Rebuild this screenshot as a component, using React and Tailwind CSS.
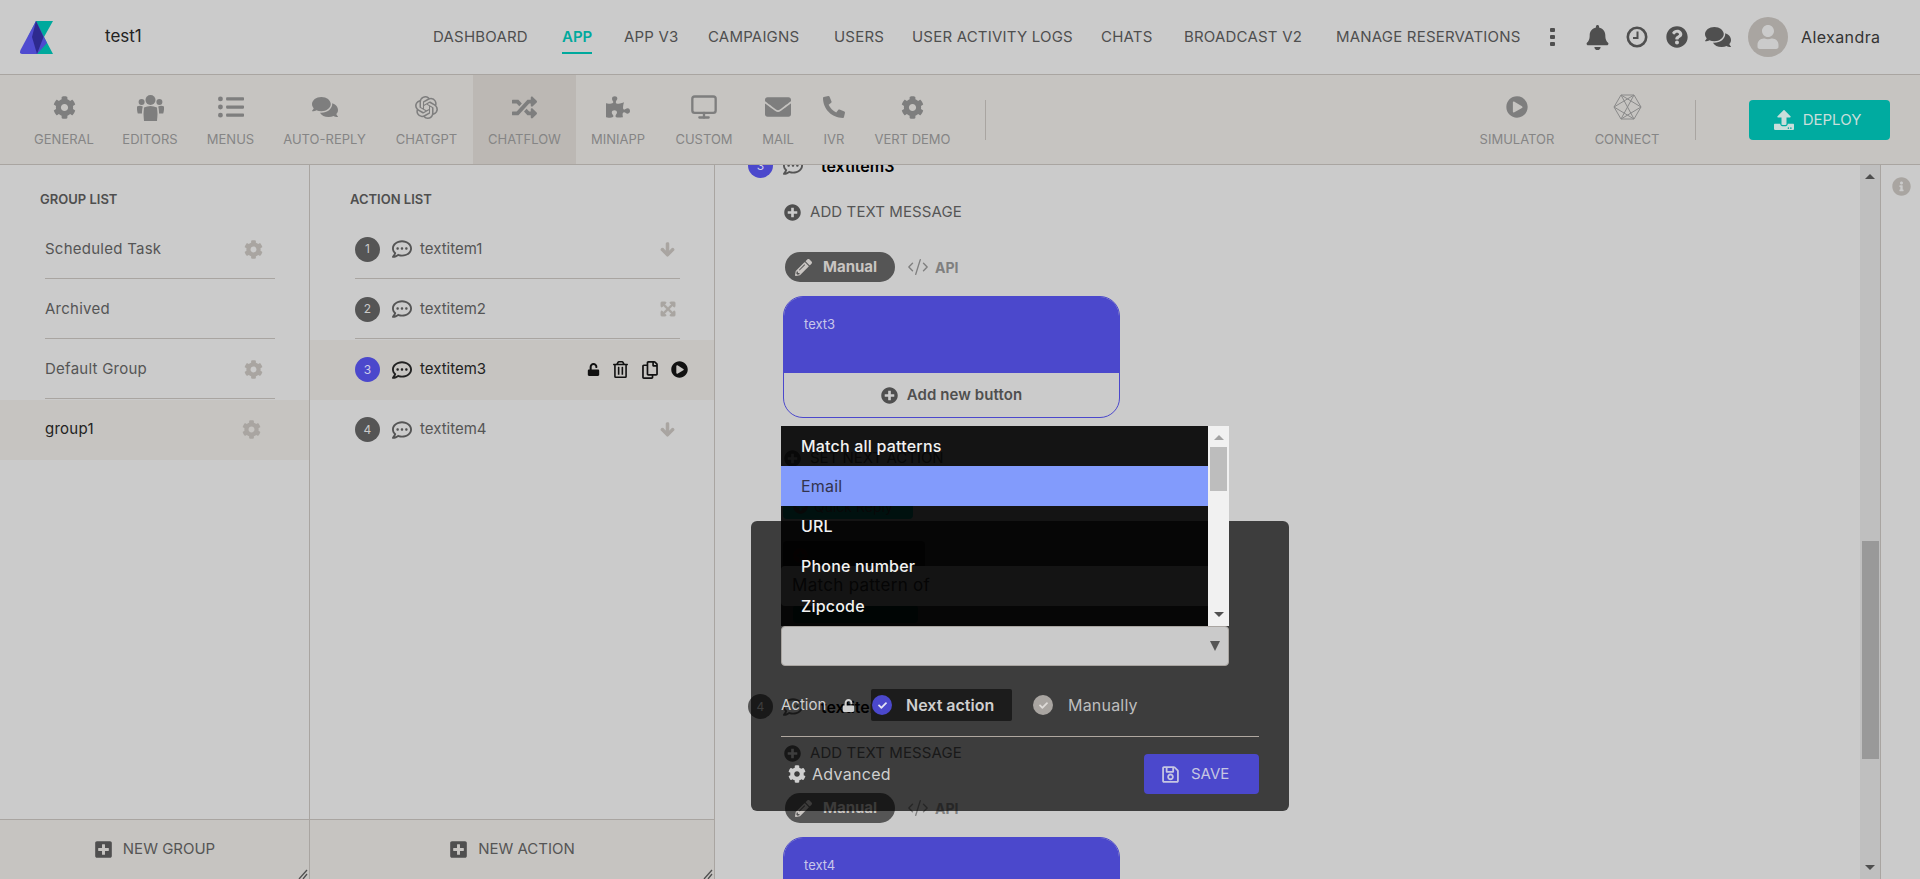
import {
  FaCog, FaListUl, FaComments, FaRandom, FaPuzzlePiece, FaEnvelope, FaPhone,
  FaPlayCircle, FaUpload, FaBell, FaQuestionCircle, FaPlusCircle, FaPencilAlt, FaPlusSquare,
  FaRegSave, FaUnlock, FaRegTrashAlt, FaRegCopy, FaArrowDown, FaExpandArrowsAlt, FaRegCommentDots,
  FaInfoCircle, FaCheck, FaUser,
} from "react-icons/fa";
import { FiMonitor } from "react-icons/fi";
import { SiOpenai } from "react-icons/si";
import { CodeXml } from "lucide-react";

const navItems = [
  { label: "DASHBOARD", w: "w-[129px]" },
  { label: "APP", w: "w-[62px]", active: true },
  { label: "APP V3", w: "w-[84px]" },
  { label: "CAMPAIGNS", w: "w-[126px]" },
  { label: "USERS", w: "w-[78px]" },
  { label: "USER ACTIVITY LOGS", w: "w-[189px]" },
  { label: "CHATS", w: "w-[83px]" },
  { label: "BROADCAST V2", w: "w-[152px]" },
  { label: "MANAGE RESERVATIONS", w: "w-[217px]" },
];

function UsersIcon() {
  return (
    <svg width="27" height="27" viewBox="0 0 27 27" fill="currentColor">
      <circle cx="13.5" cy="6" r="5" />
      <circle cx="4.6" cy="8" r="3" />
      <circle cx="22.4" cy="8" r="3" />
      <path d="M7 13.5 Q13.5 10.5 20 13.5 Q21 19 20 27 H7 Q6 19 7 13.5 Z" />
      <path d="M0 12.5 Q3 11 5.8 12.5 Q4.8 16 5 19.5 H0.8 Q-0.3 16 0 12.5 Z" />
      <path d="M27 12.5 Q24 11 21.2 12.5 Q22.2 16 22 19.5 H26.2 Q27.3 16 27 12.5 Z" />
    </svg>
  );
}

const toolItems = [
  { label: "GENERAL", Icon: FaCog, size: 23, w: "w-[88px]" },
  { label: "EDITORS", Icon: UsersIcon, w: "w-[84px]" },
  { label: "MENUS", Icon: FaListUl, size: 26, w: "w-[77px]" },
  { label: "AUTO-REPLY", Icon: FaComments, size: 26, w: "w-[111px]" },
  { label: "CHATGPT", Icon: SiOpenai, size: 23, w: "w-[93px]" },
  { label: "CHATFLOW", Icon: FaRandom, size: 25, w: "w-[103px]", active: true },
  { label: "MINIAPP", Icon: FaPuzzlePiece, size: 24, w: "w-[84px]" },
  { label: "CUSTOM", Icon: FiMonitor, size: 28, w: "w-[88px]" },
  { label: "MAIL", Icon: FaEnvelope, size: 26, w: "w-[60px]" },
  { label: "IVR", w: "w-[52px]", phone: true },
  { label: "VERT DEMO", Icon: FaCog, size: 23, w: "w-[105px]" },
];

const groups = [
  { name: "Scheduled Task", gear: true },
  { name: "Archived" },
  { name: "Default Group", gear: true },
  { name: "group1", gear: true, active: true },
];

const actions = [
  { n: 1, name: "textitem1", icon: "down" },
  { n: 2, name: "textitem2", icon: "expand" },
  { n: 3, name: "textitem3", active: true },
  { n: 4, name: "textitem4", icon: "down" },
];

const patterns = ["Match all patterns", "Email", "URL", "Phone number", "Zipcode"];

function Logo() {
  return (
    <svg width="34" height="33" viewBox="0 0 34 33" className="shrink-0">
      <path d="M16 0 L33 0 L24 16 L33 33 L17 33 L8 16 Z" fill="#00a99d" />
      <path d="M16 0 L27 22 L17 33 L2 33 Q-1 33 0.5 29 Z" fill="#4f4bd0" />
      <path d="M16 0 L23.5 16 L17 33 L12 16 Z" fill="#2e2a8f" />
    </svg>
  );
}

function ConnectIcon() {
  return (
    <svg width="29" height="26" viewBox="0 0 29 26" fill="none" stroke="#8a8a8a" strokeWidth="1">
      <path d="M8 1 H21 L28 13 L21 25 H8 L1 13 Z" />
      <path d="M8 1 L21 25 M21 1 L8 25 M1 13 L21 1 M1 13 L21 25 M28 13 L8 1 M28 13 L8 25" />
    </svg>
  );
}

function ClockIcon() {
  return (
    <svg width="22" height="22" viewBox="0 0 22 22" fill="none" stroke="#4f4f4f">
      <circle cx="11" cy="11" r="9.2" strokeWidth="2.6" />
      <path d="M11.5 5.5 V12 H7" strokeWidth="2" />
    </svg>
  );
}

function Header() {
  return (
    <header className="h-[75px] shrink-0 flex items-center border-b border-[#a9a5a1] pl-[20px] bg-[#cbcbcb]">
      <Logo />
      <span className="ml-[51px] w-[328px] text-[17px] text-[#222]">test1</span>
      <nav className="flex items-center">
        {navItems.map((item) => (
          <div key={item.label} className={`${item.w} flex justify-start`}>
            <span
              className={
                item.active
                  ? "h-[34px] pt-[6px] text-[15px] font-semibold text-[#00a99d] border-b-2 border-[#00a99d]"
                  : "h-[34px] pt-[6px] text-[15px] tracking-[0.2px] text-[#4f4f4f] whitespace-nowrap"
              }
            >
              {item.label}
            </span>
          </div>
        ))}
      </nav>
      <div className="flex items-center">
        <div className="ml-[-3px] w-[5px] flex flex-col gap-[3px]">
          <span className="h-[4px] w-[5px] bg-[#4f4f4f] rounded-[1px]" />
          <span className="h-[4px] w-[5px] bg-[#4f4f4f] rounded-[1px]" />
          <span className="h-[4px] w-[5px] bg-[#4f4f4f] rounded-[1px]" />
        </div>
        <FaBell size={25} className="ml-[30px] text-[#4f4f4f]" />
        <div className="ml-[16px]"><ClockIcon /></div>
        <FaQuestionCircle size={22} className="ml-[18px] text-[#4f4f4f]" />
        <FaComments size={26} className="ml-[17px] text-[#4f4f4f]" />
        <div className="ml-[17px] w-[40px] h-[40px] rounded-full bg-[#a9a5a1] flex items-center justify-center overflow-hidden">
          <FaUser size={24} className="text-[#cbcbcb]" />
        </div>
        <span className="ml-[13px] text-[16px] tracking-[0.4px] text-[#333]">Alexandra</span>
      </div>
    </header>
  );
}

function ToolItem({ label, Icon, size, w, active, phone, children }) {
  return (
    <div className={`${w} h-full shrink-0 flex flex-col items-center ${active ? "bg-[#bcb8b4]" : ""}`}>
      <div className="h-[26px] mt-[19px] flex items-center justify-center text-[#7e7e7e]">
        {phone ? <FaPhone size={22} className="-scale-x-100" /> : children || <Icon size={size} />}
      </div>
      <span className="mt-[10px] text-[13px] text-[#858585] whitespace-nowrap">{label}</span>
    </div>
  );
}

function Toolbar() {
  return (
    <div className="h-[90px] shrink-0 flex items-stretch pl-[20px] bg-[#c6c4c1] border-b border-[#a9a5a1]">
      {toolItems.map((item) => (
        <ToolItem key={item.label} {...item} />
      ))}
      <div className="ml-[20px] mt-[25px] h-[40px] w-px bg-[#a9a5a1]" />
      <div className="flex-1" />
      <ToolItem label="SIMULATOR" Icon={FaPlayCircle} size={22} w="w-[110px]" />
      <ToolItem label="CONNECT" w="w-[110px]">
        <ConnectIcon />
      </ToolItem>
      <div className="ml-[13px] mt-[25px] h-[40px] w-px bg-[#a9a5a1]" />
      <button className="ml-[53px] mr-[30px] mt-[25px] w-[141px] h-[40px] rounded-[4px] bg-[#00aba0] text-[#c9dedb] flex items-center justify-center gap-[9px] pr-[4px] text-[15px]">
        <FaUpload size={20} />
        DEPLOY
      </button>
    </div>
  );
}

function SideFooter({ label }) {
  return (
    <div className="relative h-[60px] shrink-0 border-t border-[#a9a5a1] bg-[#c6c4c1] flex items-center justify-center gap-[10px] text-[#4f4f4f]">
      <FaPlusSquare size={19} />
      <span className="text-[15px] text-[#555]">{label}</span>
      <svg width="10" height="10" viewBox="0 0 10 10" className="absolute right-[1px] bottom-0" stroke="#4f4f4f" fill="none">
        <path d="M1 10 L9 1 M5 10 L9 5" strokeWidth="1.3" />
      </svg>
    </div>
  );
}

function GroupList() {
  return (
    <aside className="w-[310px] shrink-0 flex flex-col border-r border-[#a9a5a1]">
      <div className="flex-1">
        <h3 className="pl-[40px] pt-[25px] h-[55px] text-[13px] font-semibold text-[#4f4f4f]">GROUP LIST</h3>
        <div>
          {groups.map((g, i) => (
            <div key={g.name} className={`h-[60px] px-[45px] ${g.active ? "bg-[#c6c4c1]" : ""}`}>
              <div className={`h-[59px] flex items-center justify-between pr-[1px] ${i < 3 ? "border-b border-[#a9a5a1] w-[230px]" : "w-[228px]"}`}>
                <span className={`text-[15px] tracking-[0.25px] ${g.active ? "text-[#222]" : "text-[#555]"}`}>{g.name}</span>
                {g.gear && <FaCog size={19} className="text-[#a9a5a1] mr-[11px]" />}
              </div>
            </div>
          ))}
        </div>
      </div>
      <SideFooter label="NEW GROUP" />
    </aside>
  );
}

function ActionList() {
  return (
    <aside className="w-[405px] shrink-0 flex flex-col border-r border-[#a9a5a1]">
      <div className="flex-1">
        <h3 className="pl-[40px] pt-[25px] h-[55px] text-[13px] font-semibold text-[#4f4f4f]">ACTION LIST</h3>
        <div>
          {actions.map((a, i) => (
            <div key={a.n} className={`h-[60px] pl-[45px] ${a.active ? "bg-[#c6c4c1]" : ""}`}>
              <div className={`h-[59px] w-[325px] flex items-center ${i < 2 ? "border-b border-[#a9a5a1]" : ""}`}>
                <span className={`w-[25px] h-[25px] rounded-full flex items-center justify-center text-[12px] ${a.active ? "bg-[#4b48cc] text-[#cfcfe8]" : "bg-[#555] text-[#cbcbcb]"}`}>
                  {a.n}
                </span>
                <FaRegCommentDots size={20} className={`ml-[12px] ${a.active ? "text-[#222]" : "text-[#555]"}`} />
                <span className={`ml-[8px] text-[15px] ${a.active ? "text-[#222]" : "text-[#555]"}`}>{a.name}</span>
                <div className="flex-1" />
                {a.icon === "down" && <FaArrowDown size={15} stroke="currentColor" strokeWidth={40} className="mr-[5px] text-[#a9a5a1]" />}
                {a.icon === "expand" && <FaExpandArrowsAlt size={16} stroke="currentColor" strokeWidth={30} className="mr-[4px] text-[#a9a5a1]" />}
                {a.active && (
                  <div className="flex items-center text-[#111] gap-[12px] mr-[-8px]">
                    <FaUnlock size={13} />
                    <FaRegTrashAlt size={17} />
                    <FaRegCopy size={18} />
                    <FaPlayCircle size={17} />
                  </div>
                )}
              </div>
            </div>
          ))}
        </div>
      </div>
      <SideFooter label="NEW ACTION" />
    </aside>
  );
}

function Block({ n, name, text, active }) {
  return (
    <div className="h-[541px] pl-[33px] shrink-0">
      <div className="h-[25px] flex items-center">
        <span className={`w-[25px] h-[25px] rounded-full flex items-center justify-center text-[12px] ${active ? "bg-[#4b48cc] text-[#cfcfe8]" : "bg-[#555] text-[#cbcbcb]"}`}>
          {n}
        </span>
        <FaRegCommentDots size={20} className="ml-[10px] text-[#555]" />
        <span className="ml-[18px] text-[16px] font-semibold text-black">{name}</span>
      </div>
      <div className="mt-[25px] ml-[36px] h-[18px] flex items-center gap-[9px] text-[#4f4f4f]">
        <FaPlusCircle size={17} />
        <span className="text-[15px] tracking-[0.1px] text-[#555]">ADD TEXT MESSAGE</span>
      </div>
      <div className="mt-[31px] ml-[37px] h-[30px] flex items-center">
        <div className="w-[110px] h-[30px] rounded-full bg-[#555] flex items-center pl-[10px] gap-[11px] text-[#c9c5c2]">
          <FaPencilAlt size={17} />
          <span className="text-[15px] font-bold">Manual</span>
        </div>
        <CodeXml size={22} strokeWidth={1.5} className="ml-[12px] text-[#7f7f7f]" />
        <span className="ml-[6px] text-[14px] font-bold text-[#7f7f7f]">API</span>
      </div>
      <div className="mt-[14px] ml-[35px] w-[337px] h-[122px] rounded-[20px] border border-[#4b48cc] overflow-hidden">
        <div className="h-[76px] bg-[#4b48cc] pl-[20px] pt-[18px] text-[13px] leading-[18px] text-[#c8c6ea]">{text}</div>
        <div className="h-[45px] flex items-center justify-center gap-[9px] text-[#4f4f4f]">
          <FaPlusCircle size={17} />
          <span className="text-[15px] font-semibold tracking-[0.1px]">Add new button</span>
        </div>
      </div>
      <div className="mt-[31px] ml-[36px] h-[18px] flex items-center gap-[9px] text-[#4f4f4f]">
        <FaPlusCircle size={17} />
        <span className="text-[15px]">SET NEXT ACTION</span>
      </div>
      <div className="mt-[26px] ml-[35px] w-[130px] h-[26px] rounded-[4px] bg-[#00a99d] flex items-center pl-[10px] gap-[6px] text-[#4f4f4f]">
        <FaPlusCircle size={15} />
        <span className="text-[14px]">Quick Reply</span>
      </div>
      <div className="mt-[22px] ml-[35px] w-[142px] h-[28px] rounded-[4px] bg-[#555] flex items-center pl-[10px] gap-[6px] text-[#4f4f4f]">
        <FaPlusCircle size={15} className="text-[#c0392b]" />
        <span className="text-[14px]">Next handler</span>
      </div>
      <div className="mt-[36px] ml-[45px] w-[125px] h-[18px] rounded-[4px] bg-[#00a99d]" />
    </div>
  );
}

function PatternDropdown() {
  return (
    <div className="absolute left-[30px] top-[-95px] w-[448px] h-[200px] flex z-10">
      <ul className="w-[427px] bg-black/90">
        {patterns.map((p) => (
          <li
            key={p}
            className={`h-[40px] pl-[20px] flex items-center text-[16px] tracking-[0.2px] ${p === "Email" ? "bg-[#829bfc] text-[#33334d]" : "text-[#f2f2f2] font-medium"}`}
          >
            {p}
          </li>
        ))}
      </ul>
      <div className="w-[21px] bg-[#f1f1f1] flex flex-col items-center px-[2px]">
        <span className="mt-[9px] w-0 h-0 border-x-[5px] border-x-transparent border-b-[5px] border-b-[#a3a3a3]" />
        <span className="mt-[7px] w-full h-[44px] bg-[#bdbdbd]" />
        <div className="flex-1" />
        <span className="mb-[9px] w-0 h-0 border-x-[5px] border-x-transparent border-t-[5px] border-t-[#505050]" />
      </div>
    </div>
  );
}

function PatternModal() {
  return (
    <div className="absolute left-[36px] top-[356px] w-[538px] h-[290px] rounded-[6px] bg-black/70 px-[30px] pt-[45px]">
      <PatternDropdown />
      <div className="h-[40px] w-[448px] rounded-[4px] bg-[#cacaca] flex items-center pl-[11px] text-[17px] tracking-[0.3px] text-[#333]">
        Match pattern of
      </div>
      <div className="mt-[20px] h-[40px] w-[448px] rounded-[4px] bg-[#cacaca] border border-[#a9a5a1] flex items-center justify-end pr-[8px]">
        <span className="w-0 h-0 border-x-[5px] border-x-transparent border-t-[10px] border-t-[#555]" />
      </div>
      <div className="mt-[23px] h-[32px] flex items-center">
        <span className="w-[61px] text-[15px] text-[#cfcfcf]">Action</span>
        <FaUnlock size={13} className="text-[#cfcfcf]" />
        <div className="ml-[16px] w-[141px] h-[32px] rounded-[2px] bg-[#1c1c1c] flex items-center pl-[1px]">
          <span className="w-[20px] h-[20px] rounded-full bg-[#4b48cc] flex items-center justify-center text-[#e4e4f5]">
            <FaCheck size={9} />
          </span>
          <span className="ml-[14px] text-[16px] font-semibold text-[#cfcfcf]">Next action</span>
        </div>
        <span className="ml-[21px] w-[20px] h-[20px] rounded-full bg-[#a9a5a1] flex items-center justify-center text-[#dedbd8]">
          <FaCheck size={9} />
        </span>
        <span className="ml-[15px] text-[16px] tracking-[0.2px] text-[#bdbdbd]">Manually</span>
      </div>
      <div className="mt-[15px] h-px bg-[#b0a8a0]" />
      <div className="mt-[17px] flex items-center justify-between">
        <div className="flex items-center pl-[7px] gap-[6px] text-[#cfcfcf]">
          <FaCog size={18} />
          <span className="text-[16px] tracking-[0.3px]">Advanced</span>
        </div>
        <button className="w-[115px] h-[40px] rounded-[4px] bg-[#4b48cc] flex items-center pl-[17px] gap-[11px] text-[15px] text-[#c6c6e2]">
          <FaRegSave size={19} />
          SAVE
        </button>
      </div>
    </div>
  );
}

function Scrollbar() {
  return (
    <div className="w-[21px] shrink-0 bg-[#bfbfbf] flex flex-col items-center border-r border-[#a9a5a1]">
      <span className="mt-[9px] w-0 h-0 border-x-[5px] border-x-transparent border-b-[5px] border-b-[#4f4f4f]" />
      <span className="mt-[362px] w-[17px] h-[218px] bg-[#999]" />
      <div className="flex-1" />
      <span className="mb-[9px] w-0 h-0 border-x-[5px] border-x-transparent border-t-[5px] border-t-[#4f4f4f]" />
    </div>
  );
}

export default function App() {
  return (
    <div className="h-screen flex flex-col overflow-hidden bg-[#cbcbcb] font-['Inter','Liberation_Sans',sans-serif]">
      <Header />
      <Toolbar />
      <main className="flex-1 flex min-h-0">
        <GroupList />
        <ActionList />
        <section className="relative flex-1 min-w-0 overflow-hidden">
          <div className="-mt-[12px]">
            <Block n={3} name="textitem3" text="text3" active />
            <Block n={4} name="textitem4" text="text4" />
          </div>
          <PatternModal />
        </section>
        <Scrollbar />
        <div className="w-[39px] shrink-0 pt-[12px] pl-[11px]">
          <FaInfoCircle size={19} className="text-[#a9a5a1]" />
        </div>
      </main>
    </div>
  );
}
